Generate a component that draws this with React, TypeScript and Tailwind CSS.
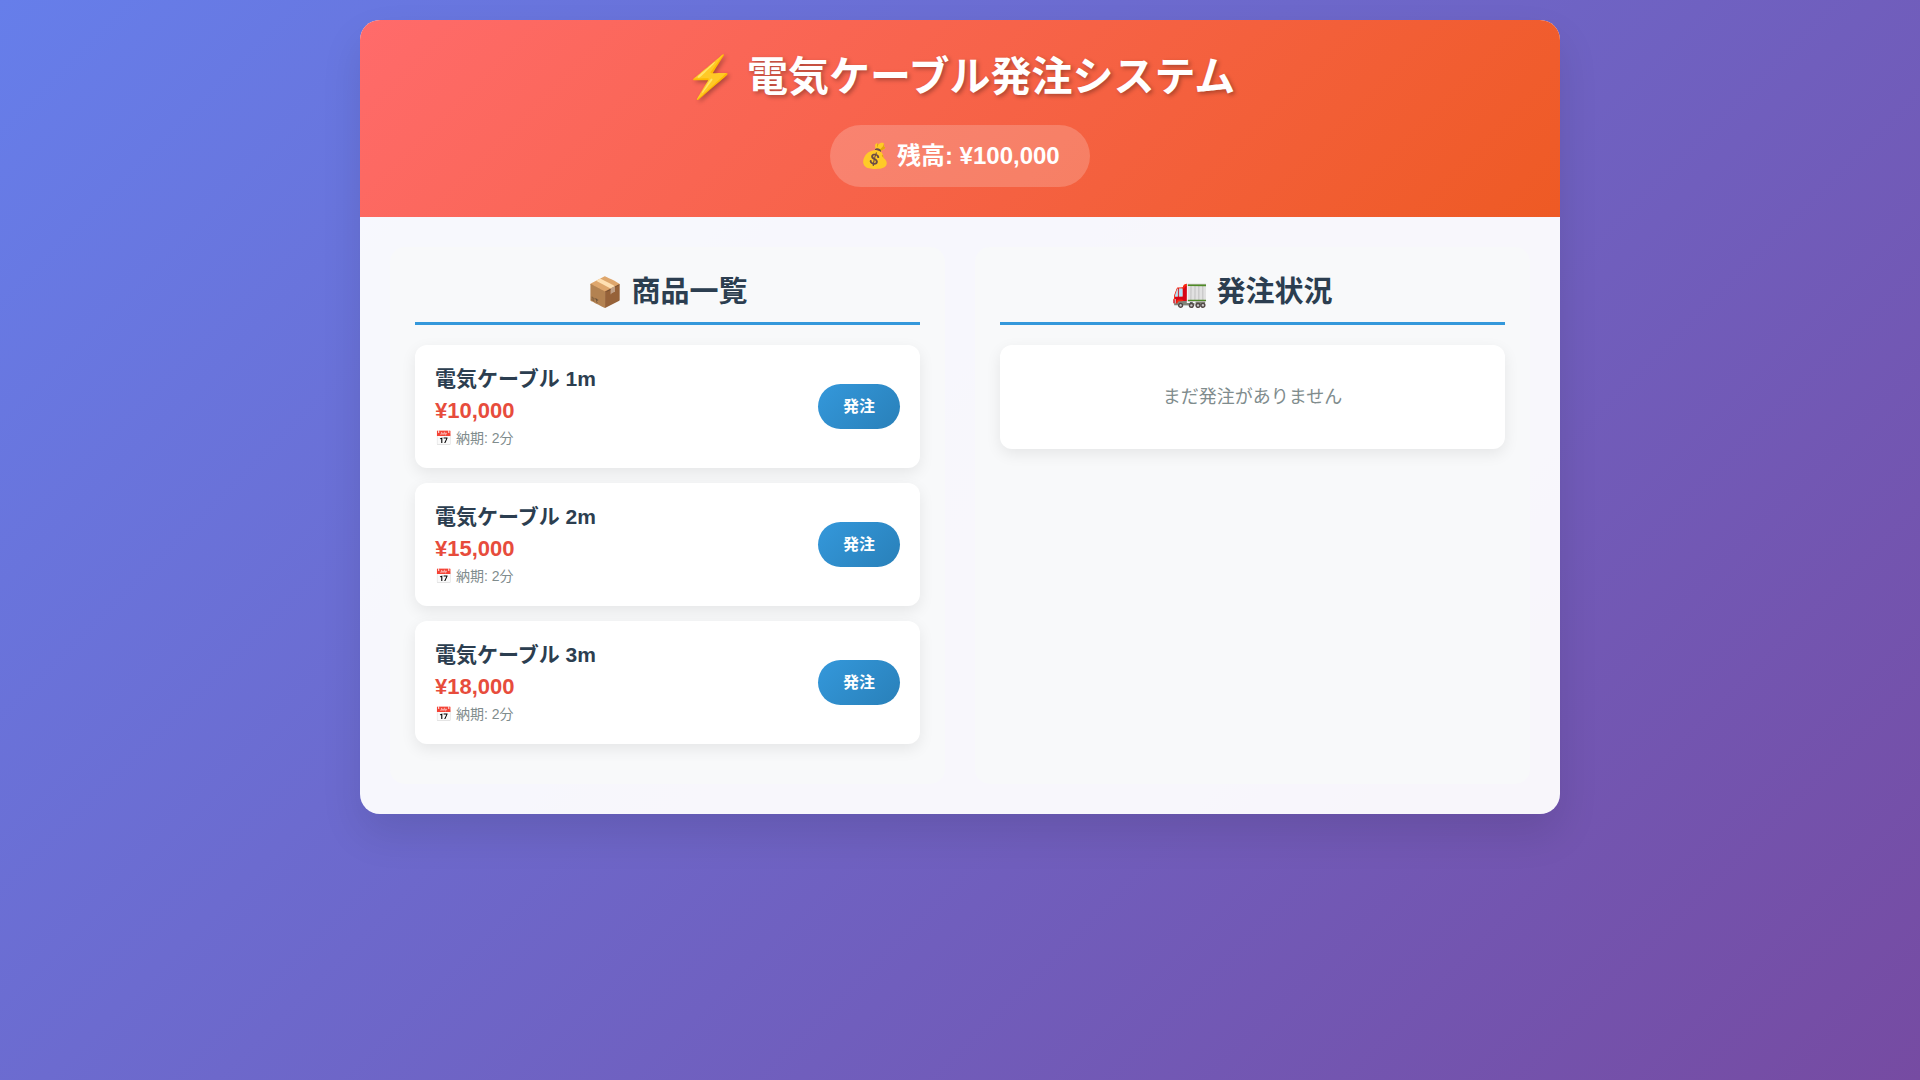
import React, { useState } from 'react';

interface Product {
  id: number;
  name: string;
  price: number;
  minutes: number;
}

const PRODUCTS: Product[] = [
  { id: 1, name: '電気ケーブル 1m', price: 10000, minutes: 2 },
  { id: 2, name: '電気ケーブル 2m', price: 15000, minutes: 2 },
  { id: 3, name: '電気ケーブル 3m', price: 18000, minutes: 2 },
];

const yen = (n: number) => `¥${n.toLocaleString('en-US')}`;

const Panel: React.FC<{ title: string; children: React.ReactNode }> = ({ title, children }) => (
  <section className="rounded-[15px] bg-[#f8f9fa] p-[25px]">
    <h2 className="mb-5 border-b-[3px] border-[#3498db] pb-[10px] text-center text-[29px] leading-10 font-bold text-[#2c3e50]">
      {title}
    </h2>
    {children}
  </section>
);

const App: React.FC = () => {
  const [balance, setBalance] = useState(100000);
  const [orders, setOrders] = useState<Product[]>([]);

  const order = (product: Product) => {
    if (balance < product.price) return;
    setBalance(balance - product.price);
    setOrders([...orders, product]);
  };

  return (
    <div className="min-h-screen bg-linear-[135deg,#667eea_0%,#764ba2_100%] p-5 font-['Liberation_Sans','Noto_Sans_CJK_JP',sans-serif]">
      <main className="mx-auto max-w-[1200px] overflow-hidden rounded-[20px] bg-white/95 shadow-[0_20px_40px_rgba(0,0,0,0.1)]">
        <header className="bg-linear-[135deg,#ff6b6b,#ee5a24] p-[30px] text-center text-white">
          <h1 className="mb-5 text-[41px] leading-[55px] font-bold [text-shadow:2px_2px_4px_rgba(0,0,0,0.3)]">
            ⚡ 電気ケーブル発注システム
          </h1>
          <div className="inline-block rounded-[50px] bg-white/20 px-[30px] py-[15px] align-top text-2xl leading-8 font-bold">
            💰 残高: {yen(balance)}
          </div>
        </header>

        <div className="grid gap-[30px] p-[30px] md:grid-cols-2">
          <Panel title="📦 商品一覧">
            {PRODUCTS.map(p => (
              <div
                key={p.id}
                className="mb-[15px] flex items-center justify-between rounded-xl bg-white p-5 shadow-[0_5px_15px_rgba(0,0,0,0.08)]"
              >
                <div>
                  <h3 className="mb-[5px] text-[21px] leading-7 font-bold text-[#2c3e50]">{p.name}</h3>
                  <div className="text-[22px] leading-[26px] font-bold text-[#e74c3c]">{yen(p.price)}</div>
                  <div className="mt-[5px] text-sm leading-[19px] text-[#7f8c8d]">📅 納期: {p.minutes}分</div>
                </div>
                <button
                  onClick={() => order(p)}
                  className="rounded-[25px] bg-linear-[135deg,#3498db,#2980b9] px-[25px] py-3 text-base leading-[21px] font-bold text-white"
                >
                  発注
                </button>
              </div>
            ))}
          </Panel>

          <Panel title="🚛 発注状況">
            {orders.length === 0 ? (
              <div className="rounded-xl bg-white p-10 text-center text-[18px] leading-6 text-[#7f8c8d] shadow-[0_5px_15px_rgba(0,0,0,0.08)]">
                まだ発注がありません
              </div>
            ) : (
              orders.map((o, i) => (
                <div key={i} className="mb-[15px] rounded-xl bg-white p-5 shadow-[0_5px_15px_rgba(0,0,0,0.08)]">
                  <h3 className="font-bold text-[#2c3e50]">{o.name}</h3>
                  <div className="text-sm text-[#7f8c8d]">📅 納期: {o.minutes}分</div>
                </div>
              ))
            )}
          </Panel>
        </div>
      </main>
    </div>
  );
};

export default App;
